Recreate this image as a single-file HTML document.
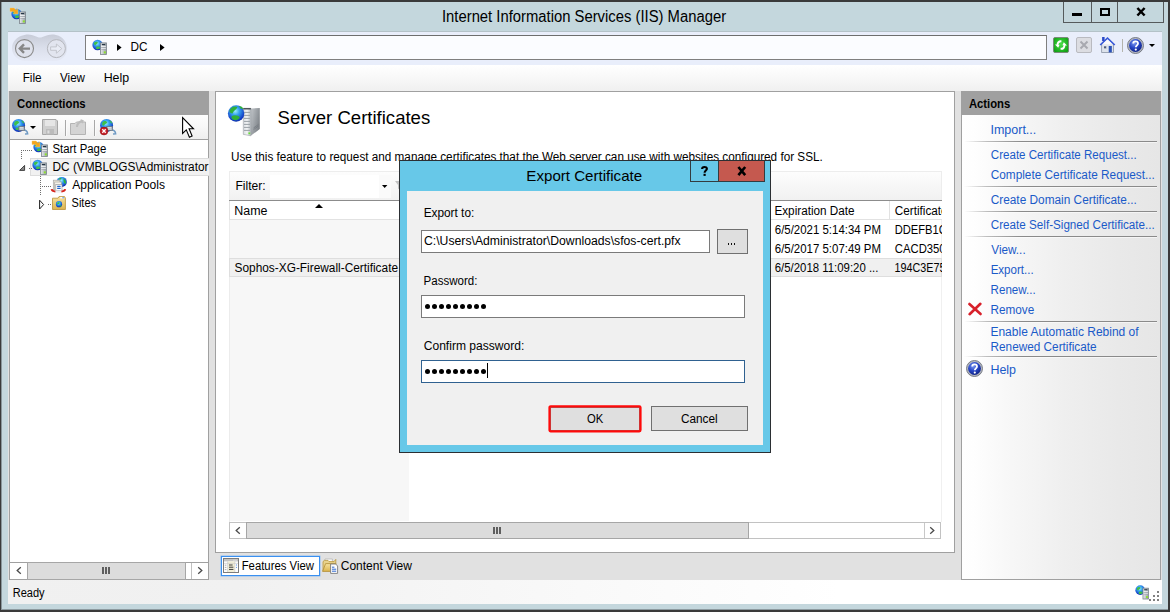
<!DOCTYPE html>
<html>
<head>
<meta charset="utf-8">
<title>Internet Information Services (IIS) Manager</title>
<style>
html,body{margin:0;padding:0;}
body{width:1170px;height:612px;overflow:hidden;position:relative;background:#c4d7dd;font-family:"Liberation Sans",sans-serif;font-size:12px;color:#000;}
.abs{position:absolute;}
.t{position:absolute;left:0;white-space:nowrap;line-height:1;transform-origin:0 0;}
svg{position:absolute;overflow:visible;}
.hl{position:absolute;height:1px;}
.vl{position:absolute;width:1px;}
.sep{position:absolute;left:964px;width:193px;height:1px;background:linear-gradient(90deg,rgba(138,138,138,0) 0%,rgba(138,138,138,0.55) 12%,#8a8a8a 30%,#8a8a8a 100%);box-shadow:0 1px 0 rgba(255,255,255,0.55);}
.tb{position:absolute;box-sizing:border-box;border:1px solid #7a7a7a;background:#fff;}
.btn{position:absolute;box-sizing:border-box;border:1px solid #707070;background:#dfdfdf;}
.dot{position:absolute;width:5.2px;height:5.2px;border-radius:50%;background:#000;}
.sb{position:absolute;box-sizing:border-box;background:#fff;}
.thumb{position:absolute;box-sizing:border-box;background:#dcdcdc;border:1px solid #acacac;}
</style>
</head>
<body>
<svg width="0" height="0" style="left:0;top:0">
  <defs>
    <radialGradient id="gb" cx="45%" cy="35%" r="70%"><stop offset="0" stop-color="#9cecff"/><stop offset="0.35" stop-color="#36a4f0"/><stop offset="0.8" stop-color="#1440c8"/><stop offset="1" stop-color="#0a2896"/></radialGradient>
    <linearGradient id="gs" x1="0" y1="0" x2="1" y2="0"><stop offset="0" stop-color="#e6e9ec"/><stop offset="1" stop-color="#9aa1a8"/></linearGradient>
    <linearGradient id="gfold" x1="0" y1="0" x2="0" y2="1"><stop offset="0" stop-color="#f6e3a0"/><stop offset="1" stop-color="#dcb44e"/></linearGradient>
    <radialGradient id="ghelp" cx="40%" cy="30%" r="75%"><stop offset="0" stop-color="#7f9cf0"/><stop offset="0.5" stop-color="#2847c8"/><stop offset="1" stop-color="#0d2080"/></radialGradient>
    <!-- 16x16 globe + server -->
    <symbol id="gsrv" viewBox="0 0 16 16">
      <circle cx="5.6" cy="6" r="5.2" fill="url(#gb)"/>
      <path d="M2.2 3.6 C3.6 2.2 5.6 2.6 6 3.8 C5.4 5 4 5 3.4 6.4 C2.4 6.2 1.6 5 2.2 3.6 Z M4.2 8 C5.6 7.2 7.6 7.6 8.4 8.6 C7.6 10.2 5.4 10.8 4 9.8 Z" fill="#3fc04a"/>
      <rect x="8.5" y="3.9" width="5.9" height="11.6" fill="url(#gs)" stroke="#7a828a" stroke-width="0.8"/>
      <path d="M9.8 5.6 H13.2" stroke="#1e2e3e" stroke-width="1.1"/>
      <path d="M9.2 7.6 H13.8 M9.2 9.4 H13.8" stroke="#f4f6f8" stroke-width="0.9"/>
      <path d="M9.2 8.5 H13.8 M9.2 10.3 H13.8" stroke="#8a9098" stroke-width="0.5"/>
      <rect x="11.8" y="12.4" width="2" height="2" fill="#8be02a"/>
    </symbol>
    <!-- globe only with connector -->
    <symbol id="gconn" viewBox="0 0 17 17">
      <circle cx="6.6" cy="7.4" r="6.5" fill="url(#gb)"/>
      <path d="M2.4 4.4 C4 2.4 6.8 2.8 7.2 4.6 C6.2 6.2 4.6 6 3.8 7.8 C2.4 7.6 1.6 6 2.4 4.4 Z M3.4 10.4 C5 9.2 7 9.4 7.4 10.8 C6.4 12.6 4.4 12.6 3.4 10.4 Z M9.4 2.2 C10.8 2.6 12 3.8 12.4 5.4 C11 5.4 9.8 4.2 9.4 2.2 Z" fill="#3fc04a"/>
      <path d="M11.6 12 C14 12 15.4 13.4 15.6 15.8 L13 16" stroke="#6f9ac4" stroke-width="1.6" fill="none"/>
      <rect x="6.8" y="8.4" width="5.6" height="4" fill="#aab4be" stroke="#66707a" stroke-width="0.7"/>
      <path d="M7.8 9.6 H11.2 M7.8 11 H11.2" stroke="#eef2f6" stroke-width="0.7"/>
    </symbol>
  </defs>
</svg>

<!-- window frame -->
<div class="abs" style="left:0;top:0;width:1170px;height:2px;background:#3a3a3a;"></div>
<div class="abs" style="left:0;top:0;width:1px;height:612px;background:#3a3a3a;"></div>
<div class="abs" style="left:1px;top:2px;width:1px;height:608px;background:#8a979c;"></div>
<div class="abs" style="left:1168px;top:0;width:2px;height:612px;background:#3a3a3a;"></div>
<div class="abs" style="left:0;top:610px;width:1170px;height:2px;background:#3a3a3a;"></div>
<div class="abs" style="left:2px;top:609px;width:1166px;height:1px;background:#8d9a9f;"></div>

<!-- title icon -->
<svg style="left:11px;top:8px" width="16" height="16"><use href="#gsrv"/><path d="M-1 0 L3 0 L5 2 L6.8 0.8 L7 5.9 L2.3 5.7 L3.6 4 L1.4 3.5 L-1 3.5 Z" fill="#f4a61e" stroke="#f8c868" stroke-width="0.4"/></svg>

<!-- window controls -->
<div class="abs" style="left:1063px;top:2px;width:101px;height:21px;box-sizing:border-box;border:1px solid #555a5c;border-top:none;">
  <div class="abs" style="left:27px;top:0;width:1px;height:20px;background:#555a5c;"></div>
  <div class="abs" style="left:53px;top:0;width:1px;height:20px;background:#555a5c;"></div>
  <div class="abs" style="left:8px;top:11px;width:10px;height:3px;background:#000;"></div>
  <div class="abs" style="left:36px;top:6px;width:10px;height:8px;box-sizing:border-box;border:2px solid #000;"></div>
  <svg style="left:72px;top:6.3px" width="10" height="8" viewBox="0 0 10 8"><path d="M1.4 0 L8.6 7.5 M8.6 0 L1.4 7.5" stroke="#000" stroke-width="2.5" fill="none"/></svg>
</div>

<!-- client -->
<div class="abs" style="left:8px;top:31px;width:1154px;height:573px;background:#e1e1e1;"></div>
<div class="abs" style="left:8px;top:31px;width:1154px;height:1px;background:#b4c2c8;"></div>
<!-- nav bar -->
<div class="abs" style="left:8px;top:32px;width:1154px;height:33px;background:#e9eefb;"></div>
<!-- back/forward -->
<svg style="left:10px;top:33px" width="60" height="30" viewBox="0 0 60 30">
  <defs><linearGradient id="pill" x1="0" y1="0" x2="0" y2="1"><stop offset="0" stop-color="#c4c8d4"/><stop offset="0.5" stop-color="#d9dde9"/><stop offset="1" stop-color="#e6eaf6"/></linearGradient></defs>
  <path d="M14.5 2 C22 0 26 4.6 30 4.6 C34 4.6 38 0 46 2 C53.6 3.6 57 10 57 15.5 C57 22 52.6 27.4 46 28 L14.5 28 C7.6 27.4 2 22 2 15.5 C2 9 6.4 3.6 14.5 2 Z" fill="url(#pill)" opacity="0.9"/>
  <circle cx="14.5" cy="15.6" r="9" fill="#dfe2ec" stroke="#8a8a8a" stroke-width="1.1"/>
  <path d="M10 15.6 H20 M14 11.4 L9.8 15.6 L14 19.8" stroke="#878787" stroke-width="2.4" fill="none"/>
  <circle cx="46.4" cy="15.6" r="9" fill="#e2e5ef" stroke="#b4b6bc" stroke-width="1"/>
  <path d="M40.6 13.9 H46.4 V11 L51.8 15.6 L46.4 20.2 V17.3 H40.6 Z" fill="#e9ecf5" stroke="#c0c2c8" stroke-width="0.9"/>
</svg>
<!-- address box -->
<div class="abs" style="left:85px;top:35px;width:962px;height:25px;box-sizing:border-box;border:1px solid #7f7f7f;border-top-color:#6e6e6e;background:#fbfcff;"></div>
<svg style="left:92px;top:39px" width="16" height="16"><use href="#gsrv"/></svg>
<svg style="left:117px;top:44px" width="5" height="7" viewBox="0 0 5 7"><path d="M0 0 L4.6 3.5 L0 7 Z" fill="#000"/></svg>
<svg style="left:160px;top:44px" width="5" height="7" viewBox="0 0 5 7"><path d="M0 0 L4.6 3.5 L0 7 Z" fill="#000"/></svg>
<!-- nav right icons -->
<svg style="left:1053px;top:37px" width="16" height="16" viewBox="0 0 16 16"><defs><radialGradient id="ggr" cx="50%" cy="45%" r="65%"><stop offset="0" stop-color="#4ae04a"/><stop offset="1" stop-color="#0c9c10"/></radialGradient></defs><rect x="0.5" y="0.5" width="15" height="15" rx="1.5" fill="url(#ggr)" stroke="#7a8a7a"/><path d="M2 7.6 L5.2 10.8 L6.6 7.8 L5.4 7.8 C5.6 6 6.8 5 8.4 5.2 L8.4 3.2 C5.6 2.8 3.8 4.6 3.6 7.6 Z M14 8.4 L10.8 5.2 L9.4 8.2 L10.6 8.2 C10.4 10 9.2 11 7.6 10.8 L7.6 12.8 C10.4 13.2 12.2 11.4 12.4 8.4 Z" fill="#fff"/></svg>
<svg style="left:1076px;top:37px" width="16" height="16" viewBox="0 0 16 16"><rect x="0.5" y="0.5" width="15" height="15" rx="1.5" fill="#dcdde2" stroke="#b9bac0"/><path d="M4.5 4.5 L11.5 11.5 M11.5 4.5 L4.5 11.5" stroke="#a8a9b0" stroke-width="2"/></svg>
<svg style="left:1098.6px;top:36px" width="17.6" height="17" viewBox="0 0 17 17" preserveAspectRatio="none"><rect x="3" y="1" width="2.4" height="4" fill="#2a48c8"/><path d="M2.5 8 H14 V16.5 H2.5 Z" fill="#dde3ec" stroke="#8a94a4" stroke-width="0.8"/><path d="M8.2 1 L15.8 8.6 L14.6 9.6 L8.2 3.2 L1.8 9.6 L0.6 8.6 Z" fill="#3a5ad8"/><path d="M8.2 3.4 L13.6 8.8 H2.8 Z" fill="#f8f9fc"/><rect x="9.4" y="10" width="3" height="6.4" fill="#2a52b8"/><rect x="4.6" y="10" width="2.8" height="2.8" fill="#4a5a78" stroke="#fff" stroke-width="0.5"/></svg>
<div class="vl" style="left:1122px;top:39px;height:13px;background:#b4b4ac;"></div>
<svg style="left:1127px;top:37px" width="17" height="17" viewBox="0 0 17 17"><circle cx="8.5" cy="8.5" r="8" fill="#b4b8c2" stroke="#6e727c" stroke-width="0.9"/><circle cx="8.5" cy="8.5" r="6.4" fill="url(#ghelp)"/><path d="M6.2 6.6 C6.2 3.6 11 3.6 11 6.4 C11 8.2 8.8 8.4 8.8 10.2" stroke="#fff" stroke-width="1.8" fill="none"/><circle cx="8.8" cy="12.6" r="1.1" fill="#fff"/></svg>
<svg style="left:1149px;top:44px" width="6" height="3" viewBox="0 0 6 3"><path d="M0 0 H6 L3 3 Z" fill="#000"/></svg>

<!-- menu bar -->
<div class="abs" style="left:8px;top:65px;width:1154px;height:26px;background:linear-gradient(#ffffff,#f8f8f8 50%,#f0f0f0);"></div>

<!-- Connections panel -->
<div class="abs" style="left:9px;top:91px;width:200px;height:489px;box-sizing:border-box;border:1px solid #a0a0a0;background:#fff;"></div>
<div class="abs" style="left:9px;top:91px;width:200px;height:24px;background:#a0a0a0;"></div>
<div class="abs" style="left:10px;top:115px;width:198px;height:24px;background:linear-gradient(#fdfdfd,#f7f7f7 50%,#eeeeee);"></div>
<div class="hl" style="left:10px;top:139px;width:198px;background:#a0a0a0;"></div>
<!-- conn toolbar icons -->
<svg style="left:12px;top:118px" width="17" height="17"><use href="#gconn"/></svg>
<svg style="left:30px;top:126px" width="6" height="3" viewBox="0 0 6 3"><path d="M0 0 H6 L3 3 Z" fill="#000"/></svg>
<svg style="left:42px;top:119px" width="16" height="16" viewBox="0 0 16 16"><path d="M0.5 0.5 H14 L15.5 2 V15.5 H0.5 Z" fill="#cfcfcf" stroke="#a6a6a6"/><rect x="3" y="1" width="10" height="6" fill="#e6e6e6"/><rect x="4" y="10" width="8" height="5.5" fill="#bcbcbc"/><rect x="5.4" y="11.4" width="2" height="3" fill="#dedede"/></svg>
<div class="vl" style="left:65px;top:120px;height:16px;background:#a8a8a8;"></div><div class="vl" style="left:66px;top:120px;height:16px;background:#fbfbfb;"></div>
<svg style="left:70px;top:119px" width="16" height="16" viewBox="0 0 16 16"><path d="M0.5 4.5 H5 L6.5 3 H15.5 V15.5 H0.5 Z" fill="#d4d4d4" stroke="#b4b4b4"/><path d="M6 8 C6 4 9 2 11 1 L10.4 0 L14 1.4 L12.4 4.8 L11.8 3.2 C10 4 8 5.6 8 8 Z" fill="#bdbdbd"/></svg>
<div class="vl" style="left:94px;top:120px;height:16px;background:#a8a8a8;"></div><div class="vl" style="left:95px;top:120px;height:16px;background:#fbfbfb;"></div>
<svg style="left:100px;top:118px" width="17" height="17"><use href="#gconn"/><circle cx="4" cy="13" r="3.9" fill="#c8202a" stroke="#8a1010" stroke-width="0.6"/><path d="M2.3 11.3 L5.7 14.7 M5.7 11.3 L2.3 14.7" stroke="#fff" stroke-width="1.3"/></svg>
<!-- cursor -->
<svg style="left:182px;top:116.6px" width="13" height="22" viewBox="0 0 13 22"><path d="M0.6 0.6 V16.4 L4.3 12.9 L7.4 20.2 L10.1 19 L7.1 11.8 H11.5 Z" fill="#fff" stroke="#000" stroke-width="1.1" stroke-linejoin="miter"/></svg>

<!-- tree -->
<div class="abs" style="left:30px;top:158px;width:179px;height:18px;box-sizing:border-box;background:#f1f1f1;border:1px solid #dcdcdc;border-right:none;"></div>
<svg style="left:0;top:0" width="220" height="220" viewBox="0 0 220 220">
  <g stroke="#6e6e6e" stroke-width="1" stroke-dasharray="1 1" fill="none">
    <path d="M21 150.5 H32 M21.5 152 V159"/>
    <path d="M29 168.5 H32"/>
    <path d="M40.5 176 V195 M42 186.5 H51"/>
    <path d="M48 204.5 H51"/>
  </g>
  <path d="M24.6 165.4 V170.4 H19.6 Z" fill="#8a8a8a" stroke="#333" stroke-width="0.9"/>
  <path d="M39.6 200.2 L43.6 204.6 L39.6 209 Z" fill="#fff" stroke="#222" stroke-width="1"/>
</svg>
<svg style="left:33px;top:141px" width="16" height="16"><use href="#gsrv"/><path d="M-1 0 L3 0 L5 2 L6.8 0.8 L7 5.9 L2.3 5.7 L3.6 4 L1.4 3.5 L-1 3.5 Z" fill="#f4a61e" stroke="#f8c868" stroke-width="0.4"/></svg>
<svg style="left:32px;top:159px" width="16" height="16"><use href="#gsrv"/></svg>
<svg style="left:51px;top:177px" width="16" height="16" viewBox="0 0 16 16"><circle cx="10.8" cy="4.9" r="5" fill="url(#gb)"/><path d="M12.6 1.4 C14.6 2.6 15.4 5 14.6 7.2 C13 6.4 12.2 3.6 12.6 1.4 Z M7.4 2 C8.4 0.8 10 0.6 10.6 1.4 C10 2.6 8.6 3 7.4 2 Z" fill="#2fb83a"/><rect x="2.3" y="3.2" width="6.6" height="9.6" fill="#f3ecd9" stroke="#a6a6a6" stroke-width="0.7"/><rect x="3.7" y="5" width="6.6" height="8.6" fill="#f8f4ea" stroke="#a6a6a6" stroke-width="0.7"/><rect x="4.8" y="7.4" width="6.2" height="6.4" fill="#fff" stroke="#9a9a9a" stroke-width="0.7"/><path d="M6.2 9.4 H9.6 M6.2 11.4 H9.6" stroke="#1e62c8" stroke-width="1.1"/><path d="M0.6 12.2 C1 15.6 13.8 15.6 14.2 12.2" fill="none" stroke="#eceff2" stroke-width="1.9"/><path d="M0.6 12.2 C0.8 13.6 2.6 14.4 4.4 14.6 M10.4 14.6 C12.2 14.4 14 13.6 14.2 12.2" fill="none" stroke="#d8261c" stroke-width="1.9"/></svg>
<svg style="left:52px;top:196px" width="15" height="14" viewBox="0 0 15 14"><path d="M0.5 2.2 H6 L7 0.6 H12.6 L13.4 2.2 V13.5 H0.5 Z" fill="url(#gfold)" stroke="#c09a44" stroke-width="0.9"/><rect x="8.2" y="1" width="3.6" height="1.4" fill="#fff"/><rect x="10.4" y="1" width="1.4" height="1.4" fill="#5a9af0"/><circle cx="7" cy="8.2" r="3.1" fill="url(#gb)"/><path d="M5.4 6.8 C6.4 6 7.8 6.2 7.8 7.2 C7 8 6.2 7.8 5.8 8.8 C5.2 8.4 5 7.4 5.4 6.8 Z M7.4 9.4 C8.4 9 9.4 9.2 9.6 9.8 C9 10.8 7.8 10.8 7.4 9.4 Z" fill="#36c040"/></svg>

<!-- conn scrollbar -->
<div class="hl" style="left:10px;top:562px;width:198px;background:#a0a0a0;"></div>
<div class="abs" style="left:10px;top:563px;width:198px;height:16px;background:#fff;"></div>
<div class="thumb" style="left:27px;top:562px;width:159px;height:18px;border-color:#a6a6a6;"></div>
<div class="vl" style="left:191px;top:563px;height:16px;background:#c0c0c0;"></div>
<svg style="left:15.5px;top:567px" width="6" height="7" viewBox="0 0 6 7"><path d="M4.8 0.3 L1.2 3.5 L4.8 6.7" stroke="#4a4a4a" stroke-width="1.3" fill="none"/></svg>
<svg style="left:196.5px;top:567px" width="6" height="7" viewBox="0 0 6 7"><path d="M1.2 0.3 L4.8 3.5 L1.2 6.7" stroke="#4a4a4a" stroke-width="1.3" fill="none"/></svg>
<div class="abs" style="left:102px;top:567px;width:2px;height:7px;background:#5e5e5e;box-shadow:3px 0 0 #5e5e5e,6px 0 0 #5e5e5e;"></div>

<!-- Center panel -->
<div class="abs" style="left:215px;top:91px;width:740px;height:462px;box-sizing:border-box;border:1px solid #a0a0a0;background:#fff;"></div>
<!-- big icon -->
<svg style="left:227px;top:102px" width="34" height="35" viewBox="0 0 34 35">
  <defs><linearGradient id="twf" x1="0" y1="0" x2="1" y2="0"><stop offset="0" stop-color="#d8dce0"/><stop offset="0.5" stop-color="#f4f5f6"/><stop offset="1" stop-color="#b4b9be"/></linearGradient>
  <linearGradient id="tws" x1="0" y1="0" x2="1" y2="0.6"><stop offset="0" stop-color="#c2c6ca"/><stop offset="0.6" stop-color="#989da2"/><stop offset="1" stop-color="#7c8186"/></linearGradient></defs>
  <path d="M23.8 6.4 L32.8 6 V27 L23.8 33.8 Z" fill="url(#tws)"/>
  <path d="M16.3 6.3 H23.8 V33.8 L16.3 32.4 Z" fill="url(#twf)" stroke="#8a9096" stroke-width="0.5"/>
  <path d="M16.3 6.8 H23.8" stroke="#30363c" stroke-width="1.2"/>
  <path d="M17 10.4 H23 M17 13.4 H23 M17 16.4 H23 M17 19.4 H23 M17 22.4 H23 M17 25.4 H23 M17 28.4 H23" stroke="#9aa0a6" stroke-width="1"/>
  <path d="M26.5 26 L31.5 22.4 M26.5 27.6 L31.5 24" stroke="#70767c" stroke-width="0.7"/>
  <rect x="21.4" y="30.4" width="1.8" height="1.8" fill="#6be03a"/>
  <circle cx="9.1" cy="11.5" r="8.2" fill="url(#gb)"/>
  <path d="M2.6 8.6 C4 4.6 8 3.6 10.4 5 C9.6 8 6.6 8 5.6 11.4 C3.6 11.6 2.2 10.4 2.6 8.6 Z M4.6 14.2 C7.6 12.6 11.6 13.4 12.8 15.6 C11.2 18.6 7 19.2 4.6 16.6 Z M12 4 C14 4 15.8 5.2 16.4 6.8 C14.6 7.2 12.8 6.2 12 4 Z" fill="#2fb03a"/>
</svg>
<!-- filter toolbar -->
<div class="abs" style="left:229px;top:171px;width:713px;height:29px;box-sizing:border-box;border:1px solid #ededed;border-bottom:none;background:linear-gradient(#fdfdfd,#f1f1f1);"></div>
<div class="abs" style="left:270px;top:175px;width:121px;height:23px;background:linear-gradient(90deg,#fff 0,#fff 109px,#fafafa 109px);"></div>
<svg style="left:382px;top:185px" width="5.4" height="3" viewBox="0 0 6 3" preserveAspectRatio="none"><path d="M0 0 H6 L3 3 Z" fill="#000"/></svg>
<svg style="left:395px;top:181px" width="8" height="9" viewBox="0 0 8 9"><path d="M0 0 H8 L5 4 V9 L3 7.4 V4 Z" fill="#c4c4c4"/></svg>
<div class="hl" style="left:229px;top:200px;width:713px;background:#8c8c8c;"></div>
<!-- list header -->
<div class="abs" style="left:229px;top:201px;width:713px;height:18px;background:#fff;"></div>
<div class="hl" style="left:229px;top:219px;width:713px;background:#e2e2e2;"></div>
<div class="vl" style="left:229px;top:201px;height:18px;background:#e2e2e2;"></div>
<div class="vl" style="left:889px;top:201px;height:18px;background:#e2e2e2;"></div>
<svg style="left:315px;top:204px" width="8" height="4" viewBox="0 0 8 4"><path d="M0 4 L4 0 L8 4 Z" fill="#000"/></svg>
<!-- sorted column bg -->
<div class="abs" style="left:229px;top:220px;width:180px;height:301px;background:#f7f7f7;"></div>
<div class="vl" style="left:941px;top:220px;height:302px;background:#f0f0f0;"></div>
<div class="vl" style="left:229px;top:220px;height:302px;background:#ececec;"></div>
<!-- selected row -->
<div class="abs" style="left:229px;top:258px;width:713px;height:19px;box-sizing:border-box;background:#f0f0f0;border:1px solid #dedede;"></div>
<!-- list scrollbar -->
<div class="abs" style="left:229px;top:522px;width:712px;height:17px;box-sizing:border-box;border:1px solid #c2c2c2;background:#fff;"></div>
<div class="thumb" style="left:246px;top:522px;width:503px;height:17px;border-color:#a6a6a6;"></div>
<div class="vl" style="left:924px;top:523px;height:15px;background:#c8c8c8;"></div>
<svg style="left:234.6px;top:527px" width="6" height="7" viewBox="0 0 6 7"><path d="M4.8 0.3 L1.2 3.5 L4.8 6.7" stroke="#4a4a4a" stroke-width="1.3" fill="none"/></svg>
<svg style="left:929.4px;top:527px" width="6" height="7" viewBox="0 0 6 7"><path d="M1.2 0.3 L4.8 3.5 L1.2 6.7" stroke="#4a4a4a" stroke-width="1.3" fill="none"/></svg>
<div class="abs" style="left:493px;top:527px;width:2px;height:7px;background:#5e5e5e;box-shadow:3px 0 0 #5e5e5e,6px 0 0 #5e5e5e;"></div>

<!-- tabs -->
<div class="abs" style="left:221px;top:556px;width:99px;height:20px;box-sizing:border-box;border:1px solid #3a90f0;background:#fff;box-shadow:0 0 0 0.4px #7ab4f4;"></div>
<svg style="left:223px;top:558px" width="16" height="15" viewBox="0 0 16 15"><rect x="0.5" y="0.5" width="15" height="14" fill="#fdfdfd" stroke="#7c7c7c"/><rect x="1" y="1" width="14" height="2.4" fill="#c4c4c4"/><path d="M10.5 2.2 h1 m1 0 h1" stroke="#fff" stroke-width="0.8"/><rect x="4.6" y="3.4" width="7.2" height="10.6" fill="#f3efd6"/><path d="M4.6 3.4 V14 M11.8 3.4 V14 M1 5.4 H15" stroke="#c8c8c8" stroke-width="0.6"/><path d="M6 7 H9.6 M6 9.2 H10.4 M6 11.4 H10.4" stroke="#3a3a3a" stroke-width="1"/><path d="M1.8 7.2 H3.4 M1.8 9.4 H3.4 M1.8 11.6 H3.4" stroke="#9a9a9a" stroke-width="0.8"/><path d="M13 7 h1 M13 9.4 h1" stroke="#4a8ae8" stroke-width="0.9"/></svg>
<svg style="left:322px;top:558px" width="17" height="16" viewBox="0 0 17 16"><path d="M3 1 H10.4 V6 H3 Z" fill="#fafafa" stroke="#a8a8a8" stroke-width="0.6"/><path d="M1 13.2 V3.6 L2.4 2.4 H6 L7 3.6 H12 L13.8 1.4 V6" fill="#e8d28c" stroke="#b8963c" stroke-width="0.8"/><path d="M0.6 13.4 L3.6 5.6 H14 L11.6 13.4 Z" fill="url(#gfold)" stroke="#b08c34" stroke-width="0.8"/><path d="M8.6 6 H13.6 L15.6 8 V15.4 H8.6 Z" fill="#fdfdfd" stroke="#7a7a7a" stroke-width="0.9"/><path d="M10 9.2 H12.4 M10 11.2 H14.2 M10 13.2 H14.2" stroke="#2a66d0" stroke-width="1"/></svg>

<!-- Actions panel -->
<div class="abs" style="left:961px;top:91px;width:200px;height:489px;box-sizing:border-box;border:1px solid #a0a0a0;background:linear-gradient(90deg,#ffffff 0%,#fefefe 6%,#f8f8f8 22%,#efefef 51%,#e9e9e9 79%,#e6e6e6 100%);"></div>
<div class="abs" style="left:961px;top:91px;width:200px;height:24px;background:#a0a0a0;"></div>
<div class="sep" style="top:141px"></div>
<div class="sep" style="top:186px"></div>
<div class="sep" style="top:211px"></div>
<div class="sep" style="top:236px"></div>
<div class="sep" style="top:321px"></div>
<div class="sep" style="top:356px"></div>
<svg style="left:968px;top:303px" width="14" height="12" viewBox="0 0 14 12"><path d="M1.4 1 L12.6 11 M12.4 0.8 L1.6 11.2" stroke="#d8202a" stroke-width="2.6" stroke-linecap="round"/></svg>
<svg style="left:966px;top:360px" width="17" height="17" viewBox="0 0 17 17"><circle cx="8.5" cy="8.5" r="8" fill="#b4b8c2" stroke="#6e727c" stroke-width="0.9"/><circle cx="8.5" cy="8.5" r="6.4" fill="url(#ghelp)"/><path d="M6.2 6.6 C6.2 3.6 11 3.6 11 6.4 C11 8.2 8.8 8.4 8.8 10.2" stroke="#fff" stroke-width="1.8" fill="none"/><circle cx="8.8" cy="12.6" r="1.1" fill="#fff"/></svg>

<!-- status bar -->
<div class="abs" style="left:8px;top:580px;width:1154px;height:24px;background:linear-gradient(90deg,#f0f0f0 0%,#f1f1f1 20%,#ffffff 72%,#ffffff 100%);"></div>
<svg style="left:1134.6px;top:584.4px" width="15" height="16"><use href="#gsrv" width="15" height="16"/></svg>
<svg style="left:1149px;top:591px" width="10" height="10" viewBox="0 0 10 10"><g fill="#808080"><rect x="8" y="0" width="2" height="2"/><rect x="4" y="4" width="2" height="2"/><rect x="8" y="4" width="2" height="2"/><rect x="0" y="8" width="2" height="2"/><rect x="4" y="8" width="2" height="2"/><rect x="8" y="8" width="2" height="2"/></g></svg>

<div class="t" style="top:9px;font-size:15.6px;transform:translateX(441.98px) scaleX(0.9501);">Internet Information Services (IIS) Manager</div>
<div class="t" style="top:41px;font-size:12px;transform:translateX(130.59px) scaleX(0.9803);">DC</div>
<div class="t" style="top:72px;font-size:12px;transform:translateX(22.67px) scaleX(0.9766);">File</div>
<div class="t" style="top:72px;font-size:12px;transform:translateX(60.07px) scaleX(0.9657);">View</div>
<div class="t" style="top:72px;font-size:12px;transform:translateX(103.64px) scaleX(1.0318);">Help</div>
<div class="t" style="top:98px;font-size:12px;font-weight:700;transform:translateX(16.96px) scaleX(0.9447);">Connections</div>
<div class="t" style="top:143px;font-size:12px;transform:translateX(52.52px) scaleX(0.9469);">Start Page</div>
<div class="t" style="top:161px;font-size:12px;transform:translateX(52.50px) scaleX(0.9873);">DC (VMBLOGS\Administrator</div>
<div class="t" style="top:179px;font-size:12px;transform:translateX(72.31px) scaleX(1.0066);">Application Pools</div>
<div class="t" style="top:197px;font-size:12px;transform:translateX(71.61px) scaleX(0.9145);">Sites</div>
<div class="t" style="top:109px;font-size:18.25px;transform:translateX(277.61px) scaleX(1.0167);">Server Certificates</div>
<div class="t" style="top:151px;font-size:12px;transform:translateX(230.92px) scaleX(0.9776);">Use this feature to request and manage certificates that the Web server can use with websites configured for SSL.</div>
<div class="t" style="top:180px;font-size:12px;transform:translateX(235.44px) scaleX(1.0046);">Filter:</div>
<div class="t" style="top:205px;font-size:12px;transform:translateX(234.37px) scaleX(1.0354);">Name</div>
<div class="t" style="top:205px;font-size:12px;transform:translateX(774.45px) scaleX(0.9762);">Expiration Date</div>
<div class="t" style="top:262px;font-size:12px;transform:translateX(234.58px) scaleX(0.9883);">Sophos-XG-Firewall-Certificate</div>
<div class="t" style="top:224px;font-size:12px;transform:translateX(774.78px) scaleX(0.9535);">6/5/2021 5:14:34 PM</div>
<div class="t" style="top:243px;font-size:12px;transform:translateX(774.78px) scaleX(0.9535);">6/5/2017 5:07:49 PM</div>
<div class="t" style="top:262px;font-size:12px;transform:translateX(774.78px) scaleX(0.9490);">6/5/2018 11:09:20 ...</div>
<div class="t" style="top:98px;font-size:12px;font-weight:700;transform:translateX(968.90px) scaleX(0.9401);">Actions</div>
<div class="t" style="top:124px;font-size:12px;color:#1a5ac8;transform:translateX(990.42px) scaleX(1.0419);">Import...</div>
<div class="t" style="top:149px;font-size:12px;color:#1a5ac8;transform:translateX(990.83px) scaleX(0.9635);">Create Certificate Request...</div>
<div class="t" style="top:169px;font-size:12px;color:#1a5ac8;transform:translateX(990.73px) scaleX(0.9845);">Complete Certificate Request...</div>
<div class="t" style="top:194px;font-size:12px;color:#1a5ac8;transform:translateX(990.72px) scaleX(0.9863);">Create Domain Certificate...</div>
<div class="t" style="top:219px;font-size:12px;color:#1a5ac8;transform:translateX(990.78px) scaleX(0.9720);">Create Self-Signed Certificate...</div>
<div class="t" style="top:244px;font-size:12px;color:#1a5ac8;transform:translateX(991.30px) scaleX(0.9773);">View...</div>
<div class="t" style="top:264px;font-size:12px;color:#1a5ac8;transform:translateX(990.65px) scaleX(0.9609);">Export...</div>
<div class="t" style="top:284px;font-size:12px;color:#1a5ac8;transform:translateX(990.60px) scaleX(0.9640);">Renew...</div>
<div class="t" style="top:304px;font-size:12px;color:#1a5ac8;transform:translateX(990.51px) scaleX(0.9792);">Remove</div>
<div class="t" style="top:326px;font-size:12px;color:#1a5ac8;transform:translateX(990.43px) scaleX(1.0007);">Enable Automatic Rebind of</div>
<div class="t" style="top:341px;font-size:12px;color:#1a5ac8;transform:translateX(990.55px) scaleX(0.9817);">Renewed Certificate</div>
<div class="t" style="top:364px;font-size:12px;color:#1a5ac8;transform:translateX(990.46px) scaleX(1.0357);">Help</div>
<div class="t" style="top:560px;font-size:12px;transform:translateX(241.69px) scaleX(0.9444);">Features View</div>
<div class="t" style="top:560px;font-size:12px;transform:translateX(340.70px) scaleX(1.0012);">Content View</div>
<div class="t" style="top:587px;font-size:12px;transform:translateX(12.68px) scaleX(0.9191);">Ready</div>
<div class="abs" style="left:894px;top:203px;width:47.50px;height:18px;overflow:hidden;"><div class="t" style="top:2px;font-size:12px;transform:translateX(0.86px) scaleX(0.9762);">Certificate Hash</div></div>
<div class="abs" style="left:894px;top:222px;width:47.50px;height:18px;overflow:hidden;"><div class="t" style="top:2px;font-size:12px;transform:translateX(0.71px) scaleX(0.9297);">DDEFB1C5A0B1</div></div>
<div class="abs" style="left:894px;top:241px;width:47.50px;height:18px;overflow:hidden;"><div class="t" style="top:2px;font-size:12px;transform:translateX(0.83px) scaleX(0.9392);">CACD350B1A2C</div></div>
<div class="abs" style="left:894px;top:260px;width:47.50px;height:18px;overflow:hidden;"><div class="t" style="top:2px;font-size:12px;transform:translateX(0.58px) scaleX(0.8963);">194C3E75B0A1</div></div>

<!-- Dialog -->
<div class="abs" style="left:399px;top:160px;width:372px;height:293px;box-sizing:border-box;border:1px solid #2b2f33;background:#67c8e8;"></div>
<div class="abs" style="left:407px;top:191px;width:356px;height:254px;background:#f0f0f0;"></div>
<!-- caption buttons -->
<div class="abs" style="left:690px;top:161px;width:75px;height:21px;box-sizing:border-box;border:1px solid #333c40;border-top:none;background:#67c8e8;"></div>
<div class="abs" style="left:718px;top:161px;width:46px;height:20px;background:#c5594f;border-left:1px solid #333c40;box-sizing:border-box;"></div>
<svg style="left:736.8px;top:167px" width="9.6" height="8.1" viewBox="0 0 9.6 8.1"><path d="M1.4 0 L8.2 8.1 M8.2 0 L1.4 8.1" stroke="#000" stroke-width="2.6" fill="none"/></svg>
<svg style="left:701.4px;top:166px" width="7" height="10" viewBox="0 0 7 10"><path d="M1.1 3 C1.1 0.3 5.9 0.3 5.9 2.8 C5.9 4.6 3.6 4.6 3.6 6.8" stroke="#000" stroke-width="2.1" fill="none"/><rect x="2.5" y="7.8" width="2.2" height="2.1" fill="#000"/></svg>
<!-- fields -->
<div class="tb" style="left:421px;top:230px;width:289px;height:23px;"></div>
<div class="btn" style="left:717px;top:229px;width:31px;height:25px;"></div>
<div class="abs" style="left:728px;top:243.4px;width:1.4px;height:1.8px;background:#111;box-shadow:3px 0 0 #111,6px 0 0 #111;"></div>
<div class="tb" style="left:421px;top:295px;width:324px;height:23px;"></div>
<div class="tb" style="left:421px;top:360px;width:324px;height:23px;border-color:#2f6190;"></div>
<div class="dot" style="left:424.8px;top:303.8px;"></div>
<div class="dot" style="left:431.8px;top:303.8px;"></div>
<div class="dot" style="left:438.8px;top:303.8px;"></div>
<div class="dot" style="left:445.8px;top:303.8px;"></div>
<div class="dot" style="left:452.8px;top:303.8px;"></div>
<div class="dot" style="left:459.8px;top:303.8px;"></div>
<div class="dot" style="left:466.8px;top:303.8px;"></div>
<div class="dot" style="left:473.8px;top:303.8px;"></div>
<div class="dot" style="left:480.8px;top:303.8px;"></div>
<div class="dot" style="left:424.8px;top:368.8px;"></div>
<div class="dot" style="left:431.8px;top:368.8px;"></div>
<div class="dot" style="left:438.8px;top:368.8px;"></div>
<div class="dot" style="left:445.8px;top:368.8px;"></div>
<div class="dot" style="left:452.8px;top:368.8px;"></div>
<div class="dot" style="left:459.8px;top:368.8px;"></div>
<div class="dot" style="left:466.8px;top:368.8px;"></div>
<div class="dot" style="left:473.8px;top:368.8px;"></div>
<div class="dot" style="left:480.8px;top:368.8px;"></div>
<div class="vl" style="left:487px;top:363px;height:15px;background:#000;"></div>
<!-- buttons -->
<div class="btn" style="left:550px;top:407px;width:90px;height:24px;border-color:#8a7070;"></div>
<svg style="left:547px;top:404px" width="96" height="30" viewBox="0 0 96 30"><rect x="2.5" y="2.3" width="91" height="25" rx="1.2" fill="none" stroke="#ff0a0a" stroke-width="2.2"/></svg>
<div class="btn" style="left:651px;top:406px;width:97px;height:25px;"></div>
<div class="t" style="top:169px;font-size:14.8px;transform:translateX(526.37px) scaleX(1.0201);">Export Certificate</div>
<div class="t" style="top:207px;font-size:12px;transform:translateX(423.63px) scaleX(0.9861);">Export to:</div>
<div class="t" style="top:235px;font-size:12px;transform:translateX(423.98px) scaleX(1.0179);">C:\Users\Administrator\Downloads\sfos-cert.pfx</div>
<div class="t" style="top:275px;font-size:12px;transform:translateX(423.58px) scaleX(0.9596);">Password:</div>
<div class="t" style="top:340px;font-size:12px;transform:translateX(423.73px) scaleX(1.0050);">Confirm password:</div>
<div class="t" style="top:413px;font-size:12px;transform:translateX(587.02px) scaleX(0.9377);">OK</div>
<div class="t" style="top:413px;font-size:12px;transform:translateX(681.00px) scaleX(0.9811);">Cancel</div>
</body>
</html>
